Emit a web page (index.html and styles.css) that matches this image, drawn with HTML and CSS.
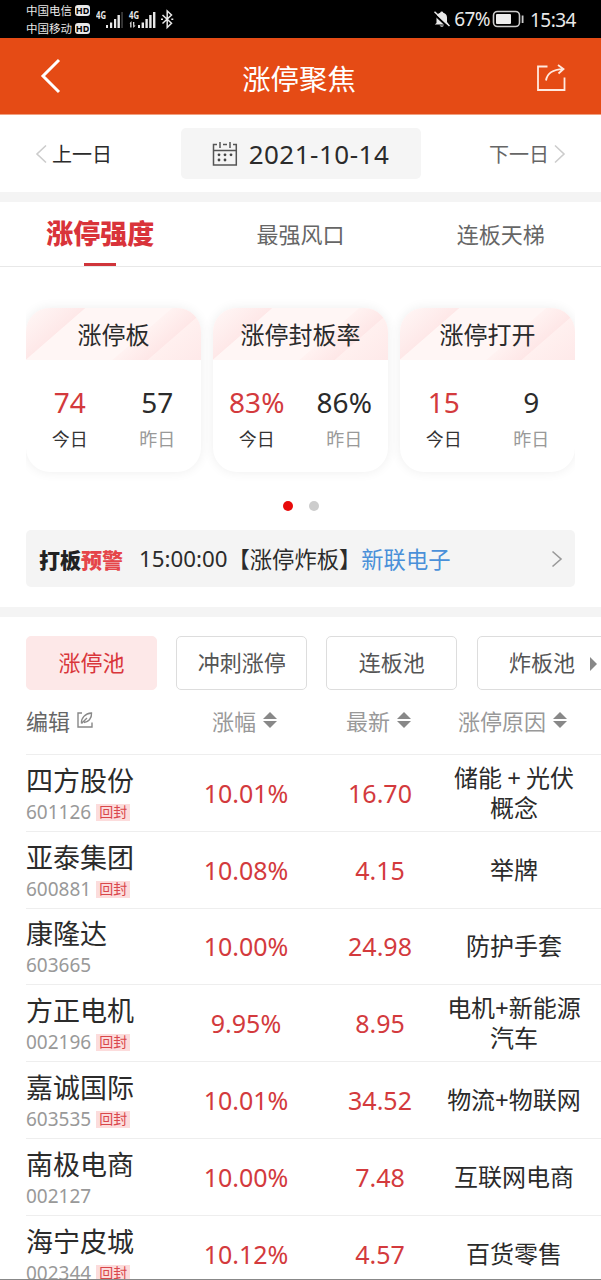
FILE: index.html
```html
<!DOCTYPE html>
<html lang="zh-CN">
<head>
<meta charset="UTF-8">
<meta name="viewport" content="width=device-width, initial-scale=1.0">
<title>涨停聚焦</title>
<link rel="stylesheet" href="styles.css">
</head>
<body>
<div class="page">
  <div class="status-bar">
    <div class="carriers">
      <div class="carrier">中国电信<span class="hd">HD</span></div>
      <div class="carrier">中国移动<span class="hd">HD</span></div>
    </div>
    <svg class="signals" width="80" height="24" viewBox="0 0 80 24">
      <g fill="#e8e8e8">
        <text class="net" x="0" y="12" textLength="10" lengthAdjust="spacingAndGlyphs">4G</text>
        <rect x="10" y="18" width="2" height="3"/>
        <rect x="14" y="15.500" width="2.200" height="5.500"/>
        <rect x="18" y="12" width="2.200" height="9"/>
        <rect x="21.500" y="8" width="2.400" height="13"/>
        <rect x="25.300" y="5" width="1.500" height="16" fill="#444"/>
        <text class="net" x="33" y="12" textLength="10" lengthAdjust="spacingAndGlyphs">4G</text>
        <path d="M33.500 16.500l2-2.500v6.500h-1.300v-4zM37 15h1.300v3.500h1.300l-2.300 2.500z"/>
        <rect x="42" y="18" width="2" height="3"/>
        <rect x="45.600" y="15.500" width="2.400" height="5.500"/>
        <rect x="49.400" y="12" width="2.400" height="9"/>
        <rect x="53.200" y="8" width="2.400" height="13"/>
        <rect x="57" y="5" width="2.400" height="16"/>
      </g>
      <path d="M66.500 8l9 8.300-4.300 4.200V4l4.300 4-9 8.500M65 12.200h2M75.300 12.200h2" fill="none" stroke="#e8e8e8" stroke-width="1.500"/>
    </svg>
    <div class="status-right">
      <svg width="18" height="18" viewBox="0 0 18 18">
        <path d="M3.500 13V7.500a5 5 0 0 1 3.700-4.700 1.600 1.600 0 0 1 3.100 0A5 5 0 0 1 14 7.500V12l1.800 2.500H1.800zM6.500 15.500h4.500q-2 2.500-4.500 0z" fill="#e8e8e8"/>
        <path d="M0.500 3.500l15 14" stroke="#000" stroke-width="2"/>
        <path d="M1.500 1.800l15 14.200" stroke="#e8e8e8" stroke-width="1.500"/>
      </svg>
      <span class="percent">67%</span>
      <svg width="33" height="18" viewBox="0 0 33 18">
        <rect x="1.500" y="1.500" width="26" height="15" rx="4" fill="none" stroke="#ccc" stroke-width="1.600"/>
        <rect x="4" y="4" width="15" height="10" rx="1" fill="#eee"/>
        <rect x="29.700" y="5.500" width="1.800" height="7.500" fill="#ccc"/>
      </svg>
      <span class="clock">15:34</span>
    </div>
  </div>

  <div class="header">
    <svg width="22" height="36" viewBox="0 0 22 36"><path d="M19 2L3 18l16 16" fill="none" stroke="#fff" stroke-width="3"/></svg>
    <h1>涨停聚焦</h1>
    <svg class="share" width="30" height="28" viewBox="0 0 30 28">
      <path d="M11.500 2.500H2v23.500h26.500V13.500M10 16.500c1-6 6-11 17-11.300M22 1l5.500 4-5 4.500" fill="none" stroke="#ffe9df" stroke-width="1.800"/>
    </svg>
  </div>

  <div class="date-row">
    <div class="day prev">
      <svg width="12" height="20" viewBox="0 0 12 20"><path d="M11 1.500L2 10l9 8.500" fill="none" stroke="#ccc" stroke-width="1.600"/></svg>
      <span>上一日</span>
    </div>
    <div class="date-box">
      <svg width="26" height="26" viewBox="0 0 26 26">
        <g fill="none" stroke="#555" stroke-width="1.500">
          <path d="M5 3.500H1.500v20.500h22.800V3.500H21M1.500 9.500h22.800"/>
          <path d="M8 1v6M18 1v6M11 3.500h4"/>
        </g>
        <g fill="#444">
          <circle cx="7" cy="13.800" r="1.400"/><circle cx="13" cy="13.800" r="1.400"/><circle cx="19" cy="13.800" r="1.400"/>
          <circle cx="7" cy="19" r="1.400"/><circle cx="13" cy="19" r="1.400"/>
        </g>
      </svg>
      <span>2021-10-14</span>
    </div>
    <div class="day next">
      <span>下一日</span>
      <svg width="12" height="20" viewBox="0 0 12 20"><path d="M1 1.500l9 8.500-9 8.500" fill="none" stroke="#ccc" stroke-width="1.600"/></svg>
    </div>
  </div>

  <div class="tabs">
    <div class="tab active">涨停强度</div>
    <div class="tab">最强风口</div>
    <div class="tab">连板天梯</div>
  </div>

  <div class="cards">
    <div class="card">
      <div class="card-title">涨停板</div>
      <div class="card-body">
        <div class="stat today"><b>74</b><span>今日</span></div>
        <div class="stat"><b>57</b><span>昨日</span></div>
      </div>
    </div>
    <div class="card">
      <div class="card-title">涨停封板率</div>
      <div class="card-body">
        <div class="stat today"><b>83%</b><span>今日</span></div>
        <div class="stat"><b>86%</b><span>昨日</span></div>
      </div>
    </div>
    <div class="card">
      <div class="card-title">涨停打开</div>
      <div class="card-body">
        <div class="stat today"><b>15</b><span>今日</span></div>
        <div class="stat"><b>9</b><span>昨日</span></div>
      </div>
    </div>
  </div>
  <div class="dots"><i class="dot on"></i><i class="dot"></i></div>

  <div class="alert">
    <span class="alert-logo">打板<em>预警</em></span>
    <span class="alert-time">15:00:00</span>
    <span class="alert-type">【涨停炸板】</span>
    <span class="alert-stock">新联电子</span>
    <svg class="alert-arrow" width="12" height="18" viewBox="0 0 12 18"><path d="M1.500 1.500l8.500 7.500-8.500 7.500" fill="none" stroke="#999" stroke-width="1.600"/></svg>
  </div>

  <div class="filters">
    <div class="filter selected">涨停池</div>
    <div class="filter">冲刺涨停</div>
    <div class="filter">连板池</div>
    <div class="filter">炸板池</div>
    <i class="more"></i>
  </div>

  <div class="row table-head">
    <div class="edit">编辑
      <svg width="18" height="18" viewBox="0 0 18 18"><path d="M6 2H2v14h14v-4.500M5.500 12.500C5 7 9 2.500 15.500 2c0.500 5.500-3.500 9.500-7.500 9.500M5.500 12.500L11 7" fill="none" stroke="#888" stroke-width="1.400"/></svg>
    </div>
    <div>涨幅<i class="sort"></i></div>
    <div>最新<i class="sort"></i></div>
    <div>涨停原因<i class="sort"></i></div>
  </div>

  <div class="row">
    <div class="stock"><p>四方股份</p><small>601126<mark>回封</mark></small></div>
    <div class="num">10.01%</div>
    <div class="num">16.70</div>
    <div class="reason">储能 + 光伏<br>概念</div>
  </div>
  <div class="row">
    <div class="stock"><p>亚泰集团</p><small>600881<mark>回封</mark></small></div>
    <div class="num">10.08%</div>
    <div class="num">4.15</div>
    <div class="reason">举牌</div>
  </div>
  <div class="row">
    <div class="stock"><p>康隆达</p><small>603665</small></div>
    <div class="num">10.00%</div>
    <div class="num">24.98</div>
    <div class="reason">防护手套</div>
  </div>
  <div class="row">
    <div class="stock"><p>方正电机</p><small>002196<mark>回封</mark></small></div>
    <div class="num">9.95%</div>
    <div class="num">8.95</div>
    <div class="reason">电机+新能源<br>汽车</div>
  </div>
  <div class="row">
    <div class="stock"><p>嘉诚国际</p><small>603535<mark>回封</mark></small></div>
    <div class="num">10.01%</div>
    <div class="num">34.52</div>
    <div class="reason">物流+物联网</div>
  </div>
  <div class="row">
    <div class="stock"><p>南极电商</p><small>002127</small></div>
    <div class="num">10.00%</div>
    <div class="num">7.48</div>
    <div class="reason">互联网电商</div>
  </div>
  <div class="row">
    <div class="stock"><p>海宁皮城</p><small>002344<mark>回封</mark></small></div>
    <div class="num">10.12%</div>
    <div class="num">4.57</div>
    <div class="reason">百货零售</div>
  </div>
</div>
</body>
</html>
```
FILE: styles.css
```css
* {
  box-sizing: border-box;
}

body {
  margin: 0;
  background: #fff;
  color: #2b2b2b;
  font-family: "Noto Sans", "Noto Sans CJK SC", sans-serif;
}

i, em {
  font-style: normal;
}

svg {
  flex: none;
}

.page {
  width: 601px;
  height: 1280px;
  overflow: hidden;
  border-bottom: 1px solid #888;
}

/* status bar */
.status-bar {
  display: flex;
  height: 38px;
  padding: 0 25px 0 26px;
  background: #000;
  color: #e8e8e8;
}

.carriers {
  padding-top: 2px;
  width: 70px;
}

.carrier {
  display: flex;
  align-items: center;
  height: 17.5px;
  font-size: 11.5px;
  line-height: 17px;
  white-space: nowrap;
}

.hd {
  margin-left: 3px;
  width: 15px;
  height: 11px;
  border-radius: 3px;
  background: #e8e8e8;
  color: #000;
  font-size: 9px;
  font-weight: bold;
  line-height: 11px;
  text-align: center;
}

.signals {
  margin-top: 7px;
}

.net {
  font-size: 10px;
  font-weight: bold;
}

.status-right {
  display: flex;
  align-items: center;
  margin-left: auto;
  font-size: 19px;
}

.percent {
  margin: 0 2px 0 3px;
  letter-spacing: -0.6px;
}

.clock {
  margin: 1px 0 0 5px;
  letter-spacing: -0.5px;
}

/* title bar */
.header {
  display: flex;
  align-items: center;
  justify-content: space-between;
  height: 77px;
  padding: 0 35px 0 40px;
  background: #e54b15;
  border-bottom: 1px solid #f0a080;
}

.header h1 {
  margin: 2px 0 0;
  color: #fff;
  font-size: 28.4px;
  font-weight: normal;
}

.share {
  margin-top: 3px;
}

.date-row {
  display: flex;
  align-items: center;
  justify-content: space-between;
  height: 87px;
  padding: 0 35px;
  border-bottom: 10px solid #f4f4f4;
}

.day {
  display: flex;
  align-items: center;
  gap: 5px;
  font-size: 20px;
}

.day.next {
  color: #666;
}

.date-box {
  display: flex;
  align-items: center;
  justify-content: center;
  gap: 11px;
  width: 240px;
  height: 51px;
  border-radius: 5px;
  background: #f5f5f5;
  font-size: 26px;
}

.date-box span {
  letter-spacing: 0.5px;
}

/* tabs */
.tabs {
  display: flex;
  height: 65px;
  border-bottom: 1px solid #e8e8e8;
}

.tab {
  flex: 1;
  display: flex;
  flex-direction: column;
  align-items: center;
  color: #666;
  font-size: 22px;
  line-height: 64px;
}

.tab.active {
  color: #d9333a;
  font-size: 27px;
  font-weight: 900;
}

.tab.active::after {
  content: "";
  width: 32px;
  height: 4px;
  margin-top: -3px;
  background: #d0353a;
}

/* summary cards */
.cards {
  display: flex;
  gap: 12px;
  height: 216px;
  margin: 17px 26px 0;
  padding: 24px 0 28px;
  overflow: hidden;
}

.card {
  flex: 1;
  overflow: hidden;
  border-radius: 24px;
  background: #fff;
  box-shadow: 0 0 12px rgba(0, 0, 0, 0.07);
}

.card-title {
  height: 52px;
  background:
    linear-gradient(139deg, #fff8f7 0, #fee8e8 25%, transparent 25.5%),
    linear-gradient(139deg, transparent 62%, #fff2f1 62.5%, #fee7e7 77%, #fff0ef 77.5%, #fee9e9 100%),
    #fff6f5;
  font-size: 24px;
  line-height: 54px;
  text-align: center;
}

.card-body {
  display: flex;
  padding-top: 24px;
}

.stat {
  flex: 1;
  color: #999;
  font-size: 18px;
  line-height: 24px;
  text-align: center;
}

.stat b {
  display: block;
  margin-bottom: 6px;
  color: #2b2b2b;
  font-size: 28px;
  font-weight: normal;
  line-height: 37px;
}

.stat.today {
  color: #333;
}

.stat.today b {
  color: #d33a3d;
}

.dots {
  display: flex;
  justify-content: center;
  gap: 16px;
  margin-top: 1px;
}

.dot {
  width: 10px;
  height: 10px;
  border-radius: 50%;
  background: #ccc;
}

.dot.on {
  background: #e80a0a;
}

/* alert line */
.alert {
  display: flex;
  align-items: center;
  height: 57px;
  margin: 19px 26px 20px;
  padding: 0 12px 0 13px;
  border-radius: 5px;
  background: #f4f4f4;
  font-size: 22.3px;
  white-space: nowrap;
}

.alert-logo {
  width: 100px;
  color: #222;
  font-size: 21px;
  font-weight: 900;
}

.alert-logo em {
  color: #e5454a;
}

.alert-stock {
  color: #4a90d9;
}

.alert-arrow {
  margin-left: auto;
}

/* pool filters */
.filters {
  position: relative;
  display: flex;
  gap: 19.2px;
  height: 83px;
  padding: 19px 0 0 26px;
  border-top: 10px solid #f4f4f4;
  overflow: hidden;
}

.filter {
  flex: none;
  width: 131px;
  height: 54px;
  border: 1.5px solid #ddd;
  border-radius: 5px;
  color: #555;
  font-size: 22px;
  line-height: 51px;
  text-align: center;
}

.filter.selected {
  border-color: #fde8e8;
  background: #fde8e8;
  color: #d9363b;
}

.more {
  position: absolute;
  top: 40px;
  left: 590px;
  border: 7px solid transparent;
  border-left-color: #888;
  border-right: 0;
}

/* stock table */
.row {
  display: grid;
  grid-template-columns: 153px 134px 134px 134px 1fr;
  align-items: center;
  height: 76.8px;
  margin-left: 26px;
  border-bottom: 1px solid #eee;
  text-align: center;
}

.table-head {
  height: 65px;
  padding-bottom: 5px;
  color: #999;
  font-size: 22px;
}

.table-head div {
  display: flex;
  align-items: center;
  justify-content: center;
  padding-right: 3px;
  white-space: nowrap;
}

.table-head .edit {
  justify-content: flex-start;
  gap: 6px;
  color: #666;
}

.sort {
  display: flex;
  flex-direction: column;
  gap: 2px;
  margin-left: 7px;
}

.sort::before,
.sort::after {
  content: "";
  border: 7px solid transparent;
  border-top: 0;
  border-bottom: 7px solid #888;
}

.sort::after {
  border-top: 7px solid #888;
  border-bottom: 0;
}

.stock {
  padding-top: 5px;
  text-align: left;
}

.stock p {
  margin: 0;
  font-size: 27px;
  line-height: 34px;
}

.stock small {
  display: flex;
  align-items: center;
  gap: 5px;
  color: #999;
  font-size: 19px;
  line-height: 29px;
}

.stock mark {
  width: 34px;
  height: 17px;
  background: #fcdcdc;
  color: #d9474b;
  font-size: 14px;
  line-height: 16px;
  text-align: center;
}

.num {
  color: #d33a3d;
  font-size: 25px;
}

.reason {
  font-size: 24px;
  line-height: 30px;
  word-spacing: -1px;
  white-space: nowrap;
}
```
